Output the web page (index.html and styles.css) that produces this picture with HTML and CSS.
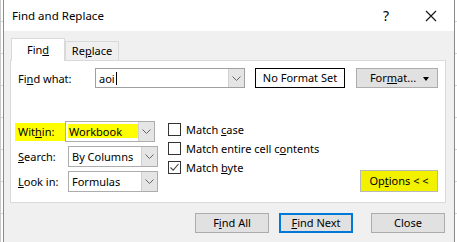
FILE: index.html
```html
<!DOCTYPE html>
<html>
<head>
<meta charset="utf-8">
<link rel="stylesheet" href="styles.css">
</head>
<body>
<div class="sheet">
  <div class="dialog">
    <div class="titlebar">
      <span class="title">Find and Replace</span>
      <span class="help">?</span>
      <svg class="close-x" width="12" height="12" viewBox="0 0 12 12"><path d="M1 1 L11 11 M11 1 L1 11" stroke="#111" stroke-width="1.1" fill="none"/></svg>
    </div>
    <div class="body">
      <div class="tabs">
        <div class="tab active">Fin<u>d</u></div>
        <div class="tab">Re<u>p</u>lace</div>
      </div>
      <div class="panel">
        <div class="row-find">
          <label class="lbl-find">Fi<u>n</u>d what:</label>
          <div class="combo combo-find">
            <span class="combo-text">aoi<span class="caret"></span></span>
            <span class="combo-btn"><svg width="9" height="5" viewBox="0 0 9 5"><path d="M0.5 0.5 L4.5 4.5 L8.5 0.5" stroke="#666" fill="none"/></svg></span>
          </div>
          <div class="noformat">No Format Set</div>
          <div class="btn btn-format">For<u>m</u>at...<span class="tri"></span></div>
        </div>
        <div class="row-opts">
          <div class="selects">
            <div class="sel-row">
              <span class="lbl-sel hl">Wit<u>h</u>in:</span>
              <div class="combo combo-sel">
                <span class="combo-text hl-box">Workbook</span>
                <span class="combo-btn"><svg width="9" height="5" viewBox="0 0 9 5"><path d="M0.5 0.5 L4.5 4.5 L8.5 0.5" stroke="#666" fill="none"/></svg></span>
              </div>
            </div>
            <div class="sel-row">
              <span class="lbl-sel"><u>S</u>earch:</span>
              <div class="combo combo-sel">
                <span class="combo-text">By Columns</span>
                <span class="combo-btn"><svg width="9" height="5" viewBox="0 0 9 5"><path d="M0.5 0.5 L4.5 4.5 L8.5 0.5" stroke="#666" fill="none"/></svg></span>
              </div>
            </div>
            <div class="sel-row">
              <span class="lbl-sel"><u>L</u>ook in:</span>
              <div class="combo combo-sel">
                <span class="combo-text">Formulas</span>
                <span class="combo-btn"><svg width="9" height="5" viewBox="0 0 9 5"><path d="M0.5 0.5 L4.5 4.5 L8.5 0.5" stroke="#666" fill="none"/></svg></span>
              </div>
            </div>
          </div>
          <div class="checks">
            <div class="chk-row"><span class="box"></span><span>Match <u>c</u>ase</span></div>
            <div class="chk-row"><span class="box"></span><span>Match entire cell c<u>o</u>ntents</span></div>
            <div class="chk-row"><span class="box"><svg width="11" height="11" viewBox="0 0 11 11"><path d="M1.5 5.5 L4.2 8.2 L9.5 2" stroke="#444" stroke-width="1.1" fill="none"/></svg></span><span>Match <u>b</u>yte</span></div>
          </div>
          <div class="btn btn-options">Op<u>t</u>ions &lt; &lt;</div>
        </div>
      </div>
      <div class="footer">
        <div class="btn btn-foot">F<u>i</u>nd All</div>
        <div class="btn btn-foot btn-default"><u>F</u>ind Next</div>
        <div class="btn btn-foot btn-close">Close</div>
      </div>
    </div>
  </div>
</div>
</body>
</html>
```
FILE: styles.css
```css
* { box-sizing: border-box; }
html, body { margin: 0; padding: 0; }
body {
  width: 457px;
  height: 242px;
  overflow: hidden;
  font-family: "Noto Sans", "Open Sans", sans-serif;
  font-size: 11px;
  color: #000;
  background-color: #fff;
  background-image:
    linear-gradient(to bottom, transparent 21px, #d4d4d4 21px, #d4d4d4 22px, transparent 22px);
  background-size: 100% 32px;
}
.sheet {
  padding-left: 2px;
  width: 455px;
  height: 242px;
  border-left: 1px solid #c8c8c8;
}
.dialog {
  width: 452px;
  height: 242px;
  border-left: 1px solid #8a8a8a;
  border-right: 1px solid #8a8a8a;
  background: #f0f0f0;
}
.titlebar {
  height: 31px;
  background: #fff;
  display: flex;
  align-items: center;
  padding-left: 8px;
}
.title { flex: 1; font-size: 11.5px; }
.help { font-size: 14px; margin-right: 36px; }
.close-x { margin-right: 17px; }
.body { padding: 7px 8px 0 6px; }
.tabs { display: flex; align-items: flex-end; height: 22px; padding-left: 1px; }
.tab {
  height: 19px;
  padding: 1px 0 0 0;
  width: 54px;
  text-align: center;
  border: 1px solid #d9d9d9;
  border-bottom: none;
  background: #f0f0f0;
}
.tab.active {
  height: 23px;
  background: #fff;
  position: relative;
  top: 1px;
  z-index: 1;
  padding-top: 3px;
}
.panel {
  height: 143px;
  border: 1px solid #d9d9d9;
  background: #fff;
  padding: 7px 7px 0 7px;
}
.row-find { display: flex; align-items: center; height: 20px; }
.lbl-find { width: 77px; }
.combo {
  display: flex;
  border: 1px solid #adadad;
  background: #fff;
}
.combo-find { width: 150px; height: 20px; border-color: #a0a0a0; }
.combo-text { flex: 1; padding-left: 3px; line-height: 17px; display: flex; align-items: center; }
.caret { display: inline-block; width: 1px; height: 13px; background: #000; margin-left: 1px; }
.combo-btn {
  width: 16px;
  background: #e5e5e5;
  border-left: 1px solid #d0d0d0;
  display: flex;
  align-items: center;
  justify-content: center;
}
.noformat {
  margin-left: 10px;
  width: 90px;
  height: 20px;
  border: 1px solid #000;
  text-align: center;
  line-height: 18px;
}
.btn {
  background: #e1e1e1;
  border: 1px solid #adadad;
  text-align: center;
}
.btn-format {
  margin-left: 11px;
  width: 82px;
  height: 20px;
  line-height: 18px;
  position: relative;
  padding-right: 8px;
}
.tri {
  position: absolute;
  right: 8px;
  top: 8px;
  border-left: 3px solid transparent;
  border-right: 3px solid transparent;
  border-top: 4px solid #000;
}
.row-opts { display: flex; margin-top: 33px; align-items: flex-start; }
.selects { display: flex; flex-direction: column; gap: 4px; }
.sel-row { display: flex; align-items: center; height: 21px; }
.lbl-sel { width: 50px; }
.hl { background: #ffff00; margin-left: -3px; padding-left: 3px; height: 18px; line-height: 18px; }
.combo-sel { width: 90px; height: 21px; }
.hl-box { background: #ffff00; margin: 2px 0 3px 2px; padding-left: 1px; }
.checks { margin-left: 10px; margin-top: 2px; display: flex; flex-direction: column; gap: 6px; }
.chk-row { display: flex; align-items: center; height: 13px; }
.box {
  width: 13px; height: 13px;
  border: 1px solid #333;
  background: #fff;
  margin-right: 5px;
  display: flex; align-items: center; justify-content: center;
}
.btn-options {
  margin-left: auto;
  margin-top: 49px;
  width: 78px;
  height: 22px;
  line-height: 20px;
  background: #f2f200;
  border-color: #b8b8b8;
}
.footer { display: flex; padding: 10px 0 0 185px; gap: 0; }
.btn-foot { width: 74px; height: 20px; line-height: 18px; }
.btn-default { margin-left: 10px; border: 2px solid #0078d7; line-height: 16px; }
.btn-close { margin-left: 18px; }
```
